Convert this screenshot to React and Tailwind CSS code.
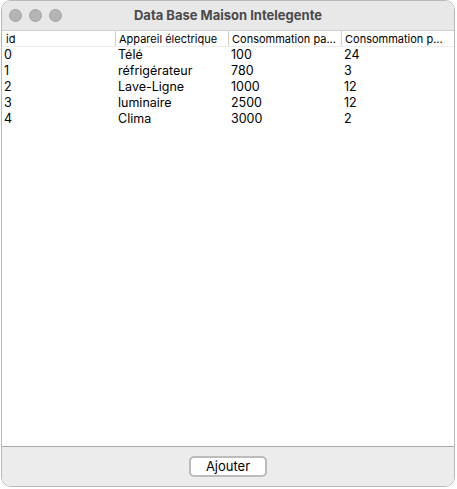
import React from 'react';

const rows = [
  ['0', 'Télé', '100', '24'],
  ['1', 'réfrigérateur', '780', '3'],
  ['2', 'Lave-Ligne', '1000', '12'],
  ['3', 'luminaire', '2500', '12'],
  ['4', 'Clima', '3000', '2'],
];

const headers = ['id', 'Appareil électrique', 'Consommation pa...', 'Consommation p...'];

export default function App() {
  return (
    <div className="w-[457px] h-[489px] bg-white pl-px" style={{ fontFamily: 'Inter, "Noto Sans", sans-serif' }}>
      <div className="w-[454px] h-[487px] rounded-[10px] border border-[#b8b8b8] overflow-hidden flex flex-col bg-white">
        {/* title bar */}
        <div className="relative h-[30px] bg-[#e8e8e8] flex items-center justify-center border-b border-[#d0d0d0]">
          <div className="absolute left-[7px] top-[8px] flex gap-[7px]">
            <span className="w-[13px] h-[13px] rounded-full bg-[#b5b5b5] border border-[#a3a3a3]"></span>
            <span className="w-[13px] h-[13px] rounded-full bg-[#b5b5b5] border border-[#a3a3a3]"></span>
            <span className="w-[13px] h-[13px] rounded-full bg-[#b5b5b5] border border-[#a3a3a3]"></span>
          </div>
          <span className="text-[13px] font-bold text-[#4a4a4a]">Data Base Maison Intelegente</span>
        </div>

        {/* table */}
        <div className="flex-1 bg-white">
          <div className="grid grid-cols-4 h-[16px] border-b border-[#ececec] text-[11px] leading-[16px] text-black">
            {headers.map((h, i) => (
              <div key={i} className={`truncate ${i > 0 ? 'pl-[3px] border-l border-[#d0d0d0]' : 'pl-[4px]'}`}>{h}</div>
            ))}
          </div>
          {rows.map((r, i) => (
            <div key={i} className="grid grid-cols-4 h-[16px] text-[12.5px] leading-[16px] text-black">
              {r.map((c, j) => (
                <div key={j} className={j === 0 ? 'pl-[2px]' : 'pl-[3px]'}>{c}</div>
              ))}
            </div>
          ))}
        </div>

        {/* footer */}
        <div className="h-[40px] bg-[#ececec] border-t border-[#a8a8a8] flex items-center justify-center">
          <button className="w-[78px] h-[21px] rounded-[5px] bg-white border-[2px] border-[#bcbcbc] text-[13px] leading-none text-black">Ajouter</button>
        </div>
      </div>
    </div>
  );
}
